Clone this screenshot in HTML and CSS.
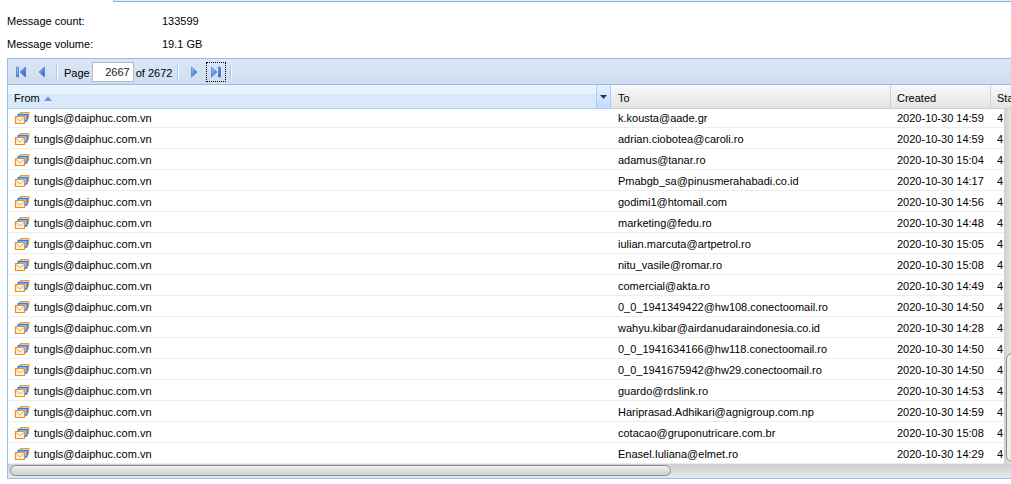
FILE: index.html
```
<!DOCTYPE html>
<html lang="en">
<head>
<meta charset="utf-8">
<title>Message queue</title>
<link rel="stylesheet" href="styles.css">
</head>
<body>
<svg class="defs" aria-hidden="true">
  <defs>
    <linearGradient id="arrow" x1="0" y1="0" x2="1" y2="1"><stop offset="0" stop-color="#a8ccfa"/><stop offset="1" stop-color="#1a50cc"/></linearGradient>
    <symbol id="mail" viewBox="0 0 16 16">
      <path d="M6.500 2.500H15L14.300 8.500H5.700z" fill="#ffedcc" stroke="#f39a2c" stroke-width="1.200" stroke-linejoin="round"/>
      <path d="M4.200 4.500H13.500L12.800 11H3.500z" fill="#9fcbff" stroke="#2a80e8" stroke-width="1.400" stroke-linejoin="round"/>
      <path d="M1.500 6.500H10.500V13.500H1.500z" fill="#fff3dc" stroke="#ee8c28" stroke-width="1.200" stroke-linejoin="round"/>
      <path d="M2 7.500 6 11 10 7.500" fill="none" stroke="#f5a850" stroke-width="1"/>
    </symbol>
  </defs>
</svg>
<div class="tabstrip"></div>
<dl class="summary">
  <dt>Message count:</dt><dd>133599</dd>
  <dt>Message volume:</dt><dd>19.1 GB</dd>
</dl>
<main class="panel">
  <div class="toolbar">
    <button class="nav" aria-label="First page"><svg width="16" height="16" viewBox="0 0 16 16"><path d="M3.500 3h2v10h-2zM12.500 3v10L7 8z" fill="url(#arrow)" stroke="#3a6ad0" stroke-width=".6"/></svg></button>
    <button class="nav" aria-label="Previous page"><svg width="16" height="16" viewBox="0 0 16 16"><path d="M10.500 3v10L5 8z" fill="url(#arrow)" stroke="#3a6ad0" stroke-width=".6"/></svg></button>
    <span class="sep"></span>
    <label class="page-label" for="page">Page</label>
    <input class="page-input" id="page" type="text" value="2667">
    <span class="page-total">of 2672</span>
    <span class="sep"></span>
    <button class="nav next" aria-label="Next page"><svg width="16" height="16" viewBox="0 0 16 16"><path d="M5.500 3v10L11 8z" fill="url(#arrow)" stroke="#3a6ad0" stroke-width=".6"/></svg></button>
    <button class="nav focused" aria-label="Last page"><svg width="16" height="16" viewBox="0 0 16 16"><path d="M3.500 3v10L9 8zM10.500 3h2v10h-2z" fill="url(#arrow)" stroke="#3a6ad0" stroke-width=".6"/></svg></button>
    <span class="sep"></span>
  </div>
  <div class="viewport">
    <table class="grid">
      <colgroup><col><col class="col-to"><col class="col-created"><col class="col-status"></colgroup>
      <thead><tr>
        <th class="sorted"><div class="head"><span>From</span><svg class="sort" width="8" height="6" viewBox="0 0 8 6"><path d="M0 6 4 1.500 8 6z" fill="#5f94d8"/></svg><button class="menu" aria-label="Column menu"><svg width="7" height="4" viewBox="0 0 7 4"><path d="M0 0h7L3.500 4z" fill="#173a80"/></svg></button></div></th>
        <th class="to">To</th><th>Created</th><th>Status</th>
      </tr></thead>
      <tbody id="rows"></tbody>
    </table>
    <div class="vscroll"><div class="vthumb"></div></div>
  </div>
  <div class="hscroll"><div class="hthumb"></div></div>
</main>
<script src="rows.js"></script>
</body>
</html>
```
FILE: rows.js
```
const messages = [
  ["k.kousta@aade.gr", "14:59"],
  ["adrian.ciobotea@caroli.ro", "14:59"],
  ["adamus@tanar.ro", "15:04"],
  ["Pmabgb_sa@pinusmerahabadi.co.id", "14:17"],
  ["godimi1@htomail.com", "14:56"],
  ["marketing@fedu.ro", "14:48"],
  ["iulian.marcuta@artpetrol.ro", "15:05"],
  ["nitu_vasile@romar.ro", "15:08"],
  ["comercial@akta.ro", "14:49"],
  ["0_0_1941349422@hw108.conectoomail.ro", "14:50"],
  ["wahyu.kibar@airdanudaraindonesia.co.id", "14:28"],
  ["0_0_1941634166@hw118.conectoomail.ro", "14:50"],
  ["0_0_1941675942@hw29.conectoomail.ro", "14:50"],
  ["guardo@rdslink.ro", "14:53"],
  ["Hariprasad.Adhikari@agnigroup.com.np", "14:59"],
  ["cotacao@gruponutricare.com.br", "15:08"],
  ["Enasel.Iuliana@elmet.ro", "14:29"]
];
document.getElementById("rows").innerHTML = messages.map(([to, time]) =>
  `<tr><td><div class="from"><svg width="16" height="16" aria-hidden="true"><use href="#mail"/></svg><span>tungls@daiphuc.com.vn</span></div></td><td class="to">${to}</td><td>2020-10-30 ${time}</td><td>4</td></tr>`
).join("");
```
FILE: styles.css
```
* { box-sizing: border-box; }
body { margin: 0; background: #fff; color: #000; font: 11px/14px "Liberation Sans", Arial, sans-serif; overflow: hidden; }
button { margin: 0; padding: 0; border: 0; background: none; }
svg { display: block; flex: none; }
.defs { position: absolute; width: 0; height: 0; }
.tabstrip { height: 2px; margin-left: 113px; background: #deecfd; border-bottom: 1px solid #8db2e3; border-left: 1px solid #8db2e3; }
.summary { display: grid; grid-template-columns: 155px 1fr; row-gap: 9px; margin: 0; padding: 12px 0 7px 7px; }
.summary dd { margin: 0; }
.panel { margin-left: 7px; border: 1px solid #99bbe8; border-right: 0; }
.toolbar { display: flex; align-items: center; height: 26px; padding-left: 1px; background: linear-gradient(#dbe7f5, #ceddef); border-bottom: 1px solid #99bbe8; }
.nav { display: flex; align-items: center; justify-content: center; width: 18px; height: 18px; margin-left: 3px; }
.nav.next { margin-left: 6px; }
.focused { margin-left: 4px; outline: 1px dotted #000; }
.sep { width: 2px; height: 14px; margin-left: 5px; border-left: 1px solid #98c8ff; border-right: 1px solid #fff; }
.page-label { margin: 2px 2px 0 6px; }
.page-input { width: 42px; height: 20px; padding: 0 3px; border: 1px solid #b5b8c8; background: #fff; color: #222; font: inherit; text-align: right; }
.page-total { margin: 2px 0 0 2px; }
.viewport { position: relative; overflow: hidden; }
.grid { width: 100%; table-layout: fixed; border-collapse: separate; border-spacing: 0; }
.col-to { width: 280px; }
.col-created { width: 100px; }
.col-status { width: 20px; }
.grid th { height: 24px; padding: 2px 0 0 6px; background: linear-gradient(#f9f9f9, #e3e4e6); border-right: 1px solid #d0d0d0; border-bottom: 1px solid #d0d0d0; font-weight: normal; text-align: left; overflow: hidden; white-space: nowrap; }
.grid th:last-child { border-right: 0; }
.grid th.sorted { padding: 0 0 0 6px; background: linear-gradient(#ebf3fd 0 40%, #d9e8fb 40%); border-color: #aaccf6; }
.head { display: flex; align-items: center; height: 23px; padding-top: 2px; }
.sort { margin: 0 auto 0 4px; }
.menu { display: flex; align-items: center; justify-content: center; align-self: stretch; width: 14px; margin-top: -2px; background: linear-gradient(#e7f1fd, #bfdbff); border-left: 1px solid #aaccf6; }
.grid td { height: 21px; padding: 2px 0 0 6px; border-bottom: 1px solid #ededed; overflow: hidden; white-space: nowrap; }
.grid tbody tr:first-child td { height: 19px; padding-top: 0; }
.grid .to { padding-left: 7px; }
.from { display: flex; align-items: center; gap: 4px; height: 18px; }
.vscroll { position: absolute; top: 24px; right: 0; bottom: 0; width: 7px; background: linear-gradient(90deg, #cfcfcf, #e4e4e4); overflow: hidden; }
.vthumb { width: 14px; height: 109px; margin: 244px 0 0 2px; border: 1px solid #8f8f8f; border-radius: 6px; background: linear-gradient(90deg, #f0f0f0, #d8d8d8); }
.hscroll { height: 14px; padding: 1px 2px; background: linear-gradient(#cfcfcf, #e8e8e8); }
.hthumb { width: 66.2%; height: 11px; border: 1px solid #8f8f8f; border-radius: 6px; background: linear-gradient(#efefef, #cfcfcf); }
```
